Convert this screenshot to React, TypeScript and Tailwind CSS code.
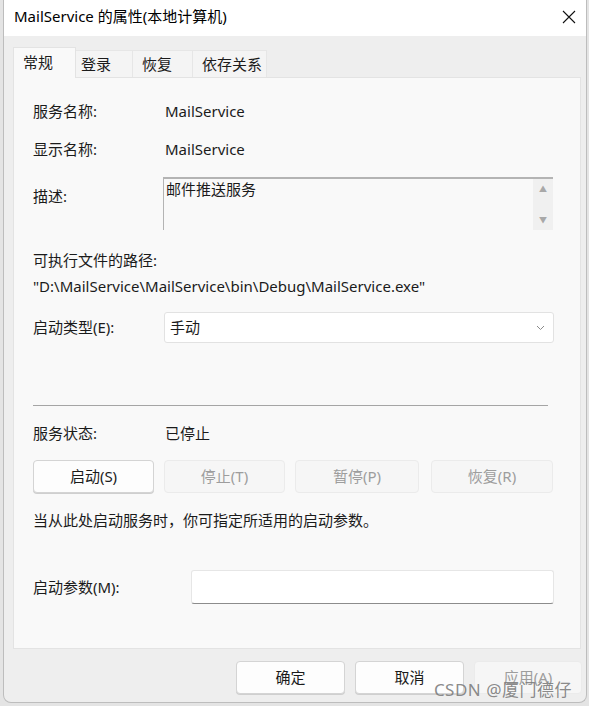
import React from 'react';

const font = { fontFamily: '"Noto Sans", "Noto Sans CJK SC", sans-serif' };

const Row = ({ label, children, className = '' }: { label: string; children: React.ReactNode; className?: string }) => (
    <div className={`flex items-center ${className}`}>
        <div className="w-[132px] shrink-0">{label}</div>
        {children}
    </div>
);

const Btn = ({ label, disabled, className = '' }: { label: string; disabled?: boolean; className?: string }) => (
    <div
        className={`h-[33px] flex items-center justify-center rounded-[4px] border ${
            disabled ? 'border-[#ebebeb] bg-[#f6f6f6] text-[#9d9d9d]' : 'border-[#d4d4d4] bg-[#fdfdfd] text-[#1b1b1b] shadow-[0_1px_0_#cfcfcf]'
        } ${className}`}
    >
        {label}
    </div>
);

const Tab = ({ label, active, className = '' }: { label: string; active?: boolean; className?: string }) => (
    <div
        className={
            (active
                ? 'h-[31px] pl-[9px] pb-[2px] flex items-center bg-[#f9f9f9] border border-b-0 border-[#e3e3e3] relative -mb-px z-10 '
                : 'h-[27px] pl-[5px] flex items-center bg-[#f4f4f4] border border-b-0 border-l-0 border-[#e6e6e6] text-[#1b1b1b] ') + className
        }
    >
        {label}
    </div>
);

export default function App() {
    return (
        <div className="w-[589px] h-[706px] bg-[#e4e4e4] overflow-hidden text-[15px] text-[#1b1b1b]" style={font}>
            <div className="ml-[3px] w-[584px] h-[703px] bg-[#eeeeee] border-l border-r border-b border-[#bdbdbd] rounded-b-[8px] flex flex-col">
                {/* title bar */}
                <div className="h-[36px] bg-white flex items-center justify-between pl-[10px] pr-[10px] shrink-0">
                    <span className="text-[15px] text-black -mt-[3px]">MailService 的属性(本地计算机)</span>
                    <svg width="14" height="14" viewBox="0 0 14 14" className="-mt-[3px]">
                        <path d="M1 1 L13 13 M13 1 L1 13" stroke="#111" strokeWidth="1.1" />
                    </svg>
                </div>

                {/* tabs */}
                <div className="pl-[9px] pt-[11px] flex items-end shrink-0">
                    <Tab label="常规" active className="w-[63px]" />
                    <Tab label="登录" className="w-[57px]" />
                    <Tab label="恢复" className="w-[60px] pl-[9px]" />
                    <Tab label="依存关系" className="w-[74px] pl-[9px]" />
                </div>

                {/* panel */}
                <div className="ml-[9px] w-[568px] h-[572px] bg-[#f9f9f9] border border-[#e3e3e3] pl-[19px] pr-[26px] pt-[21px] shrink-0">
                    <Row label="服务名称:" className="h-[24px]">
                        <span>MailService</span>
                    </Row>
                    <Row label="显示名称:" className="h-[24px] mt-[14px]">
                        <span>MailService</span>
                    </Row>
                    <div className="flex mt-[16px]">
                        <div className="w-[130px] shrink-0 pt-[8px]">描述:</div>
                        <div className="w-[390px] h-[53px] flex bg-[#f9f9f9] border-t-2 border-l border-[#b4b4b4] border-r-0 border-b-0">
                            <div className="flex-1 pl-[2px] leading-[20px]">邮件推送服务</div>
                            <div className="w-[20px] bg-[#f0f0f0] flex flex-col items-center justify-between py-[6px] text-[8px] text-[#a8a8a8] leading-none">
                                <span>▲</span>
                                <span>▼</span>
                            </div>
                        </div>
                    </div>
                    <div className="mt-[18px] leading-[24px]">可执行文件的路径:</div>
                    <div className="leading-[24px] mt-[2px]">"D:\MailService\MailService\bin\Debug\MailService.exe"</div>
                    <div className="flex items-center mt-[14px]">
                        <div className="w-[131px] shrink-0">启动类型(E):</div>
                        <div className="w-[390px] h-[31px] bg-white border border-[#e2e2e2] rounded-[3px] flex items-center justify-between pl-[5px] pr-[8px]">
                            <span>手动</span>
                            <svg width="9" height="6" viewBox="0 0 9 6">
                                <path d="M1 1 L4.5 4.5 L8 1" stroke="#8a8a8a" strokeWidth="1" fill="none" />
                            </svg>
                        </div>
                    </div>

                    <div className="mt-[62px] h-[1px] w-[515px] bg-[#a5a5a5]" />

                    <Row label="服务状态:" className="h-[24px] mt-[15px]">
                        <span>已停止</span>
                    </Row>

                    <div className="flex mt-[15px]">
                        <Btn label="启动(S)" className="w-[121px]" />
                        <Btn label="停止(T)" disabled className="w-[121px] ml-[10px]" />
                        <Btn label="暂停(P)" disabled className="w-[124px] ml-[10px]" />
                        <Btn label="恢复(R)" disabled className="w-[122px] ml-[12px]" />
                    </div>

                    <div className="mt-[15px] leading-[24px]">当从此处启动服务时，你可指定所适用的启动参数。</div>

                    <div className="flex items-center mt-[38px]">
                        <div className="w-[158px] shrink-0">启动参数(M):</div>
                        <div className="w-[363px] h-[34px] bg-white border-b border-[#8c8c8c] border-t border-l border-r border-t-[#e6e6e6] border-l-[#e6e6e6] border-r-[#e6e6e6] rounded-[3px]" />
                    </div>
                </div>

                {/* footer buttons */}
                <div className="flex justify-end pr-[4px] mt-[12px] relative">
                    <Btn label="确定" className="w-[109px]" />
                    <Btn label="取消" className="w-[109px] ml-[10px]" />
                    <Btn label="应用(A)" disabled className="w-[108px] ml-[10px]" />
                    <div className="absolute right-[14px] top-[16px] text-[17px] text-[#7c7c7c]/90 tracking-[0.5px]">CSDN @厦门德仔</div>
                </div>
            </div>
        </div>
    );
}
